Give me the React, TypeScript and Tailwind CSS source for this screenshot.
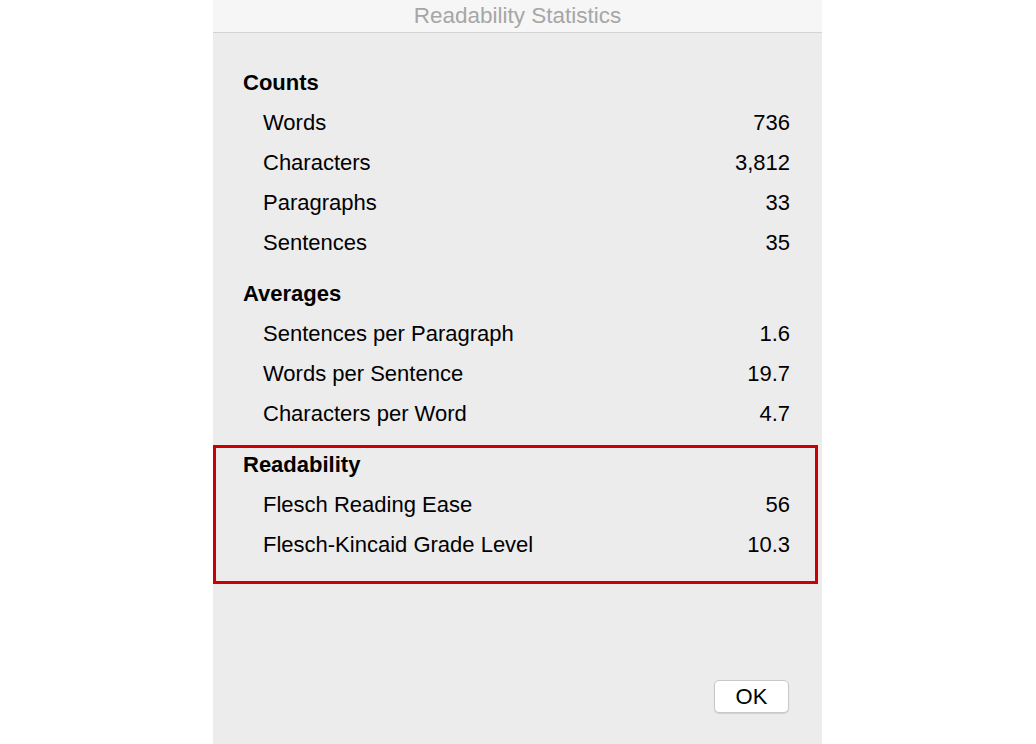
import React from "react";

type Row = [string, string];

const sections: { title: string; rows: Row[]; highlight?: boolean }[] = [
  {
    title: "Counts",
    rows: [
      ["Words", "736"],
      ["Characters", "3,812"],
      ["Paragraphs", "33"],
      ["Sentences", "35"],
    ],
  },
  {
    title: "Averages",
    rows: [
      ["Sentences per Paragraph", "1.6"],
      ["Words per Sentence", "19.7"],
      ["Characters per Word", "4.7"],
    ],
  },
  {
    title: "Readability",
    rows: [
      ["Flesch Reading Ease", "56"],
      ["Flesch-Kincaid Grade Level", "10.3"],
    ],
    highlight: true,
  },
];

export default function App() {
  return (
    <div
      className="w-[1036px] h-[744px] bg-white flex pl-[213px] overflow-hidden"
      style={{ fontFamily: '"Liberation Sans", Arial, sans-serif' }}
    >
      <div className="w-[609px] h-full bg-[#ececec] flex flex-col">
        <div className="h-[33px] bg-[#f6f6f6] border-b border-[#d3d3d3] flex items-center justify-center text-[22.5px] text-[#a6a6a6]">
          Readability Statistics
        </div>
        <div className="pt-[29px] pl-[30px] pr-[32px] flex flex-col gap-[11px] text-[22px] text-black">
          {sections.map((s) => (
            <div key={s.title} className="relative">
              {s.highlight && (
                <div className="absolute left-[-30px] right-[-28px] top-[1px] h-[139px] border-[3px] border-[#cc0000] pointer-events-none" />
              )}
              <div className="h-[40px] flex items-center font-bold">{s.title}</div>
              {s.rows.map(([k, v]) => (
                <div key={k} className="h-[40px] flex items-center justify-between pl-[20px]">
                  <span>{k}</span>
                  <span>{v}</span>
                </div>
              ))}
            </div>
          ))}
        </div>
        <div className="flex-1" />
        <div className="flex justify-end pr-[33px] pb-[31px]">
          <button className="w-[75px] h-[33px] bg-white border border-[#c8c8c8] rounded-[5px] shadow-[0_1px_1px_rgba(0,0,0,0.12)] text-[22px] text-black flex items-center justify-center">
            OK
          </button>
        </div>
      </div>
    </div>
  );
}
